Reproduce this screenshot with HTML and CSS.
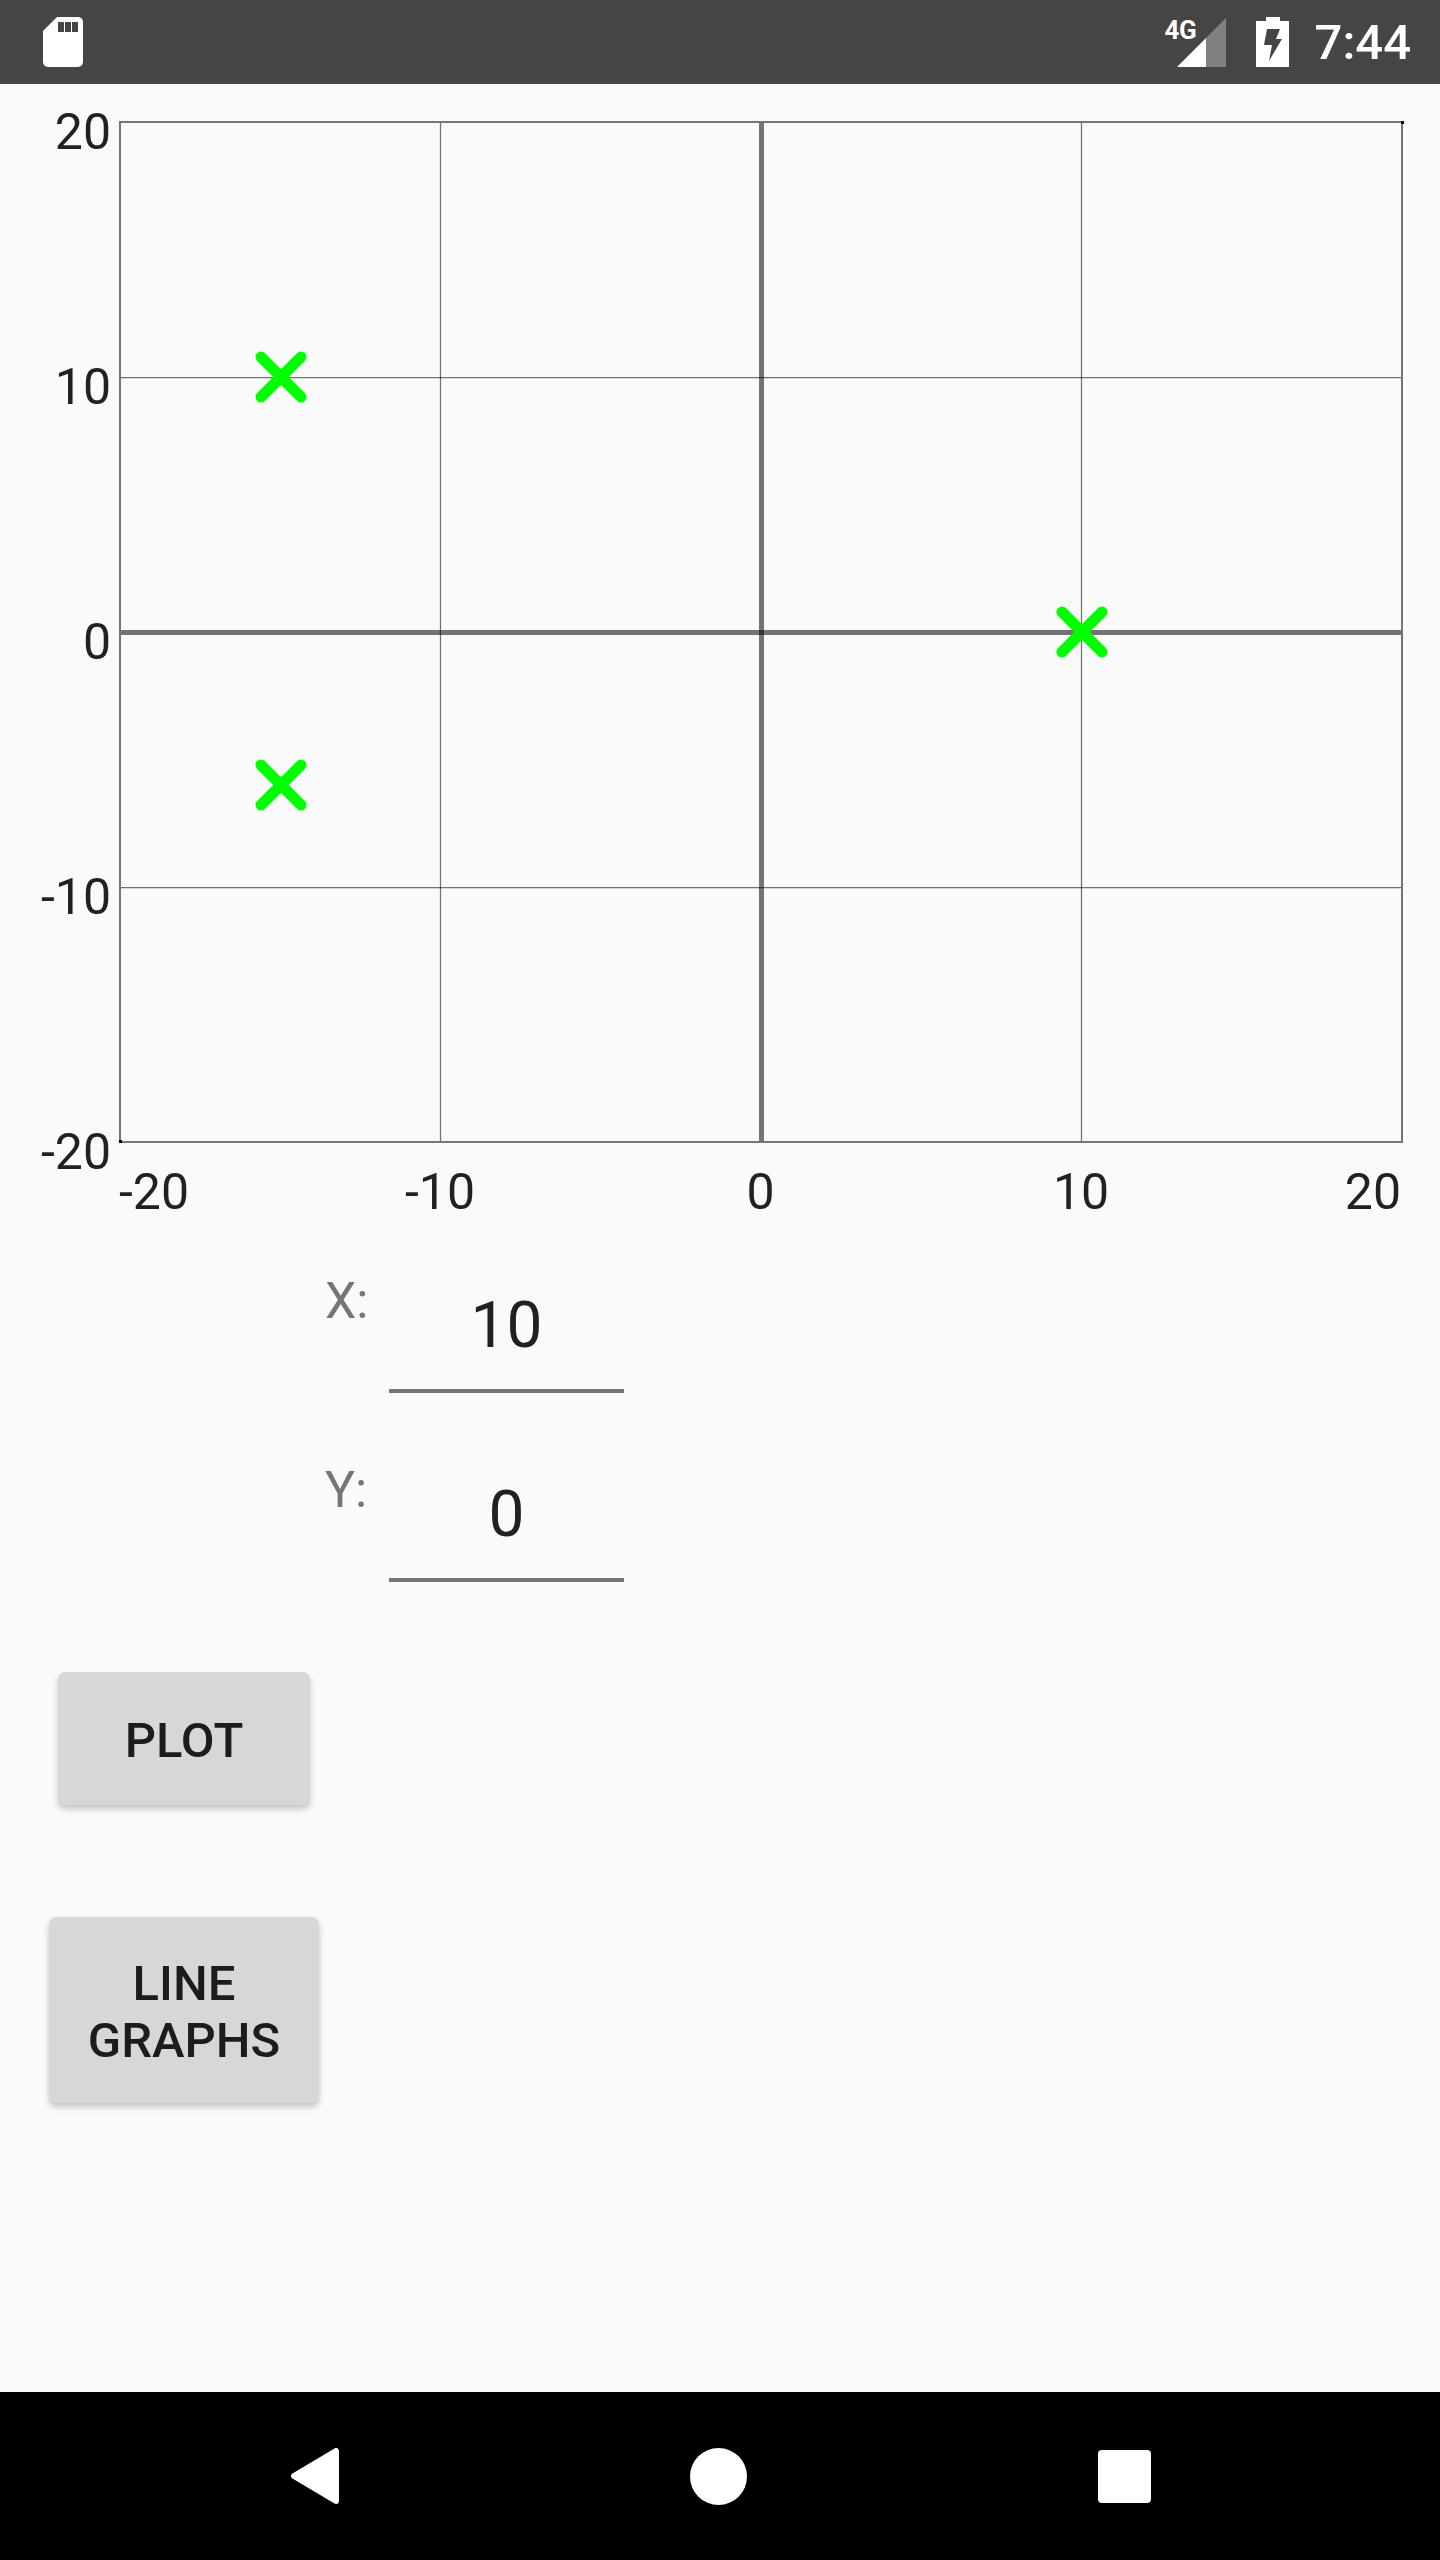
FILE: index.html
```html
<!DOCTYPE html>
<html lang="en">
<head>
  <meta charset="UTF-8">
  <title>Plot</title>
  <link rel="stylesheet" href="styles.css">
</head>
<body>
  <header class="status-bar">
    <svg class="sd-icon" width="40" height="50" viewBox="0 0 40 50">
      <path fill="#fff" d="M14 0H35a5 5 0 0 1 5 5V45a5 5 0 0 1-5 5H5a5 5 0 0 1-5-5V14Z"/>
      <rect x="15" y="5" width="6" height="10" fill="#454545"/>
      <rect x="22" y="5" width="6" height="10" fill="#454545"/>
      <rect x="29" y="5" width="6" height="10" fill="#454545"/>
    </svg>
    <div class="status-right">
      <div class="signal">
        <span class="signal-label">4G</span>
        <svg width="49" height="49" viewBox="0 0 49 49">
          <path fill="#808080" d="M49 0V49H29V20Z"/>
          <path fill="#fff" d="M29 20V49H0Z"/>
        </svg>
      </div>
      <svg class="battery" width="33" height="50" viewBox="0 0 33 50">
        <path fill="#fff" d="M10 0H24V4H33V50H0V4H10Z"/>
        <path fill="#454545" d="M11 12H24L20 22H26L13 44L16 28H8Z"/>
      </svg>
      <span class="clock">7:44</span>
    </div>
  </header>

  <main class="content">
    <section class="chart">
      <div class="y-axis">
        <span>20</span>
        <span>10</span>
        <span>0</span>
        <span>-10</span>
        <span>-20</span>
      </div>
      <svg class="plot" width="1285" height="1022" viewBox="0 0 1285 1022">
        <!-- grid -->
        <g class="grid-line">
          <line x1="321.5" y1="1" x2="321.5" y2="1021"/>
          <line x1="962.5" y1="1" x2="962.5" y2="1021"/>
          <line x1="1" y1="256.5" x2="1283" y2="256.5"/>
          <line x1="1" y1="766.5" x2="1283" y2="766.5"/>
        </g>
        <g class="axis-line">
          <line x1="642.5" y1="1" x2="642.5" y2="1021"/>
          <line x1="1" y1="511.5" x2="1283" y2="511.5"/>
        </g>
        <rect class="frame" x="1" y="1" width="1282" height="1020"/>
        <rect x="1282" y="0" width="3" height="3"/>
        <rect x="0" y="1019" width="3" height="3"/>
        <!-- points -->
        <g class="marker" transform="translate(162 256)"><path d="M-20-20L20 20M20-20L-20 20"/></g>
        <g class="marker" transform="translate(162 664)"><path d="M-20-20L20 20M20-20L-20 20"/></g>
        <g class="marker" transform="translate(963 511)"><path d="M-20-20L20 20M20-20L-20 20"/></g>
      </svg>
      <div class="x-axis">
        <span>-20</span>
        <span>-10</span>
        <span>0</span>
        <span>10</span>
        <span>20</span>
      </div>
    </section>

    <section class="inputs">
      <label class="input-label">X:</label>
      <div class="input-value">10</div>
      <label class="input-label">Y:</label>
      <div class="input-value">0</div>
    </section>

    <section class="actions">
      <button class="btn btn-plot">PLOT</button>
      <button class="btn btn-lines">LINE<br>GRAPHS</button>
    </section>
  </main>

  <footer class="nav-bar">
    <svg width="50" height="56" viewBox="0 0 50 56">
      <path class="nav-back" d="M5 28L47 3V53Z"/>
    </svg>
    <div class="nav-home"></div>
    <div class="nav-recent"></div>
  </footer>
</body>
</html>
```

FILE: styles.css
```css
body {
  font-family: Roboto, "Liberation Sans", sans-serif;
  margin: 0;
  padding: 0;
  min-height: 100vh;
  display: flex;
  flex-direction: column;
  background-color: #fafafa;
  color: #212121;
}

/* Status bar */
.status-bar {
  height: 84px;
  flex-shrink: 0;
  display: flex;
  align-items: center;
  justify-content: space-between;
  padding: 0 29px 0 43px;
  background-color: #454545;
  color: white;
}
.status-right {
  display: flex;
  align-items: center;
}
.signal {
  position: relative;
  width: 49px;
  height: 49px;
}
.signal svg {
  display: block;
}
.signal-label {
  position: absolute;
  left: -12px;
  top: 0;
  font-size: 26px;
  line-height: 25px;
  font-weight: 700;
  letter-spacing: -0.5px;
}
.battery {
  margin-left: 30px;
}
.clock {
  margin-left: 26px;
  font-size: 49px;
  line-height: 57px;
  font-weight: 500;
}

/* Chart */
.content {
  flex: 1;
}
.chart {
  display: grid;
  grid-template-columns: 119px 1285px;
  padding-top: 37px;
  font-size: 50px;
  line-height: 57px;
}
.y-axis {
  grid-row: 1 / span 2;
  height: 1077px;
  margin-top: -17px;
  padding-right: 8px;
  display: flex;
  flex-direction: column;
  justify-content: space-between;
  align-items: flex-end;
}
.plot {
  display: block;
}
.grid-line line {
  stroke: rgba(0, 0, 0, 0.55);
  stroke-width: 1.25;
}
.axis-line line {
  stroke: rgba(0, 0, 0, 0.54);
  stroke-width: 5;
}
.frame {
  fill: none;
  stroke: #757575;
  stroke-width: 2;
}
.marker path {
  fill: none;
  stroke: #00ff00;
  stroke-width: 11;
  stroke-linecap: round;
}
.x-axis {
  display: grid;
  grid-template-columns: 161px 320px 321px 320px 160px;
  margin-top: 21px;
  margin-bottom: -1px;
  text-align: center;
}
.x-axis span:first-child {
  text-align: left;
}
.x-axis span:last-child {
  text-align: right;
}

/* X / Y fields */
.inputs {
  display: grid;
  grid-template-columns: 64px 235px;
  grid-auto-rows: 189px;
  margin: 4px 0 0 325px;
}
.input-label {
  font-size: 50px;
  line-height: 57px;
  color: #757575;
  padding-top: 49px;
}
.input-value {
  box-sizing: border-box;
  height: 104px;
  margin-top: 65px;
  font-size: 64px;
  line-height: 74px;
  text-align: center;
  border-bottom: 4px solid #757575;
}

/* Buttons */
.actions {
  display: flex;
  flex-direction: column;
  align-items: flex-start;
}
.btn {
  border: none;
  padding: 4px 0 0;
  font-family: inherit;
  font-size: 49px;
  line-height: 57px;
  font-weight: 500;
  color: #1c1c1c;
  background-color: #d6d7d7;
  border-radius: 7px;
  box-shadow: 0 4px 6px rgba(0, 0, 0, 0.22);
}
.btn-plot {
  width: 252px;
  height: 133px;
  margin: 70px 0 0 58px;
}
.btn-lines {
  width: 270px;
  height: 186px;
  margin: 112px 0 0 49px;
}

/* Navigation bar */
.nav-bar {
  height: 168px;
  flex-shrink: 0;
  display: flex;
  align-items: center;
  justify-content: center;
  gap: 351px;
  background-color: #000;
}
.nav-back {
  fill: white;
  stroke: white;
  stroke-width: 6;
  stroke-linejoin: round;
}
.nav-home {
  width: 57px;
  height: 57px;
  border-radius: 50%;
  background-color: white;
}
.nav-recent {
  width: 53px;
  height: 53px;
  border-radius: 4px;
  background-color: white;
}
```
